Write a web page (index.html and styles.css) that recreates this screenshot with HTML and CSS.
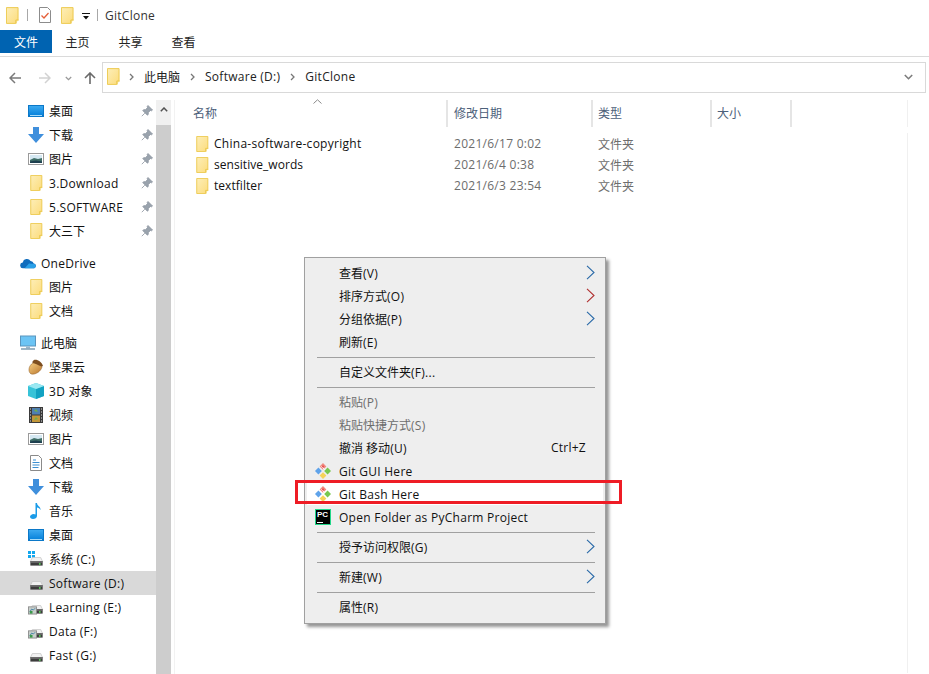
FILE: index.html
```html
<!DOCTYPE html>
<html lang="zh-CN">
<head>
<meta charset="utf-8">
<title>GitClone</title>
<link rel="stylesheet" href="styles.css">
</head>
<body>
<svg class="defs" width="0" height="0" aria-hidden="true">
  <defs>
    <linearGradient id="fg" x1="0" y1="0" x2="1" y2="1"><stop offset="0" stop-color="#fdeeb8"/><stop offset="1" stop-color="#fcdc7c"/></linearGradient>
    <linearGradient id="desk" x1="0" y1="0" x2="0" y2="1"><stop offset="0" stop-color="#3ba9f0"/><stop offset="1" stop-color="#0a84dc"/></linearGradient>
    <linearGradient id="nutg" x1="0" y1="0" x2="1" y2="1"><stop offset="0" stop-color="#f6cf82"/><stop offset="1" stop-color="#b9752c"/></linearGradient>
    <symbol id="folder" viewBox="0 0 14 18"><path d="M.5.5h12.5v13.500h-2.500v3.500H.5z" fill="url(#fg)" stroke="#ecc849"/><path d="M11 17.500V14h2.500" fill="#fff8d8" stroke="#ecc849"/></symbol>
    <symbol id="pin" viewBox="0 0 12 12"><path d="M7 .5l4.500 4.500-1 .8-1-.3L7.200 7.400 7.300 9.400 6.400 10.200 1.800 5.600 2.600 4.700 4.600 4.800 6.500 2.500 6.200 1.500zM3.800 8.200L.8 11.200" fill="#9aa3ad" stroke="#8a939e" stroke-width=".8"/></symbol>
    <symbol id="desktop" viewBox="0 0 16 12"><rect x="0" y="0" width="16" height="12" fill="#0b78c8"/><rect x="1" y="1" width="14" height="9" fill="url(#desk)"/><path d="M2 10.500h12" stroke="#a8dcfa"/></symbol>
    <symbol id="down" viewBox="0 0 16 16"><path d="M5 0h6v7h5l-8 9-8-9h5z" fill="#3f8fdc"/></symbol>
    <symbol id="pic" viewBox="0 0 16 12"><rect x=".5" y=".5" width="15" height="11" fill="#fff" stroke="#9a9a9a"/><rect x="2" y="2" width="12" height="8" fill="#d5e8f2"/><path d="M2 7l4-2 4 1 4-1v5H2z" fill="#3e6d66"/><path d="M2 8.500l6-1 6 1V10H2z" fill="#1d3f4f"/></symbol>
    <symbol id="cloud" viewBox="0 0 17 12"><path d="M3.500 11.500a3 3 0 0 1-.6-6 4.500 4.500 0 0 1 8.300-1.500 3.800 3.800 0 0 1 3.400 2.600 2.500 2.500 0 0 1 .5 4.900z" fill="#0f6cbd"/><path d="M5 11.500l4.500-5 6 .5a2.500 2.500 0 0 1-.500 4.500z" fill="#2aa0e8"/></symbol>
    <symbol id="pc" viewBox="0 0 16 15"><rect x=".5" y=".5" width="15" height="10" fill="#6cc4f4" stroke="#5a95bd"/><path d="M6 11h4v2H6z" fill="#9ab8cc"/><path d="M1 13.500h14" stroke="#7d9db2" stroke-width="1.500"/></symbol>
    <symbol id="nut" viewBox="0 0 16 16"><path d="M5 4c3-1 7 1 9 4-1 4-6 8-11 7C0 13 0 7 5 4z" fill="url(#nutg)" stroke="#8f5a22" stroke-width=".5"/><path d="M6 1c3-1 8 2 9 6-1 1-3 0-5-1S6 4 5 4 4 2 6 1z" fill="#7d4e1f"/></symbol>
    <symbol id="cube" viewBox="0 0 16 16"><path d="M8 0l8 3v10l-8 3-8-3V3z" fill="#37c3d8"/><path d="M8 6l8-3v10l-8 3z" fill="#12a2c2"/><path d="M8 0l8 3-8 3-8-3z" fill="#9ae8f2"/></symbol>
    <symbol id="film" viewBox="0 0 14 16"><rect width="14" height="16" fill="#3a3a3a"/><rect x="3" y="1" width="8" height="6.500" fill="#4f7fb2"/><rect x="3" y="8.500" width="8" height="6.500" fill="#c2973a"/><path d="M1 2h1M1 5h1M1 8h1M1 11h1M1 14h1M12 2h1M12 5h1M12 8h1M12 11h1M12 14h1" stroke="#ddd"/><path d="M5 4l2-2 2 3zM5 13l2-3 2 2z" fill="#6fb04a"/></symbol>
    <symbol id="doc" viewBox="0 0 12 16"><path d="M.5.500h8l3 3v12H.5z" fill="#fff" stroke="#8a8a8a"/><path d="M3 5h3M2.500 7.500h7M2.500 10h7M2.500 12.500h6" stroke="#3b8fd0"/></symbol>
    <symbol id="note" viewBox="0 0 12 16"><path d="M5.500 0h1.500c0 3 4 3.500 3.500 7-.8-1.600-2-2.300-3.500-2.500V13c0 2-2 3-4 3s-3-1-3-2.200S1.800 11 3.500 11c.8 0 1.500.2 2 .5z" fill="#1a9be8"/></symbol>
    <symbol id="drive" viewBox="0 0 16 11"><path d="M3 .5h10l2.500 5h-15z" fill="#f1f1f1" stroke="#c8c8c8"/><rect x=".5" y="5" width="15" height="5.500" fill="#3c3c3c"/><rect x="1" y="5.500" width="14" height="1.200" fill="#8e8e8e"/><rect x="11" y="7.500" width="2" height="2" fill="#5fdc5f"/></symbol>
    <symbol id="win" viewBox="0 0 6 6"><path d="M0 0h2.600v2.600H0zM3.400 0H6v2.600H3.400zM0 3.400h2.600V6H0zM3.400 3.400H6V6H3.400z" fill="#11a7ee"/></symbol>
    <symbol id="net" viewBox="0 0 10 10"><rect x=".5" y="1.500" width="9" height="8" fill="#c9d0cc" stroke="#8c8c8c"/><path d="M2 7l2-3 2 1 2-2" stroke="#3f7ea6" fill="none"/><rect x="2" y="6" width="3" height="3" fill="#3c9a4a"/></symbol>
    <symbol id="git" viewBox="0 0 16 16"><path d="M8 0l3.400 3.400L8 6.800 4.600 3.400z" fill="#f08a80"/><path d="M3.400 4.600L6.800 8 3.400 11.400 0 8z" fill="#5fa3ea"/><path d="M12.600 4.600L16 8l-3.400 3.400L9.200 8z" fill="#78c850"/><path d="M8 9.200l3.400 3.400L8 16l-3.400-3.400z" fill="#f5d35a"/><path d="M6.500 3.400l3.400 3.400" stroke="#fff"/><circle cx="8" cy="3.400" r="1" fill="#e84a4a"/></symbol>
    <symbol id="chev" viewBox="0 0 9 15"><path d="M1 .8L8 7.500 1 14.200" fill="none" stroke="#2a6aa8" stroke-width="1.100"/></symbol>
    <symbol id="chev-red" viewBox="0 0 9 15"><path d="M1 .8L8 7.500 1 14.200" fill="none" stroke="#b03030" stroke-width="1.100"/></symbol>
    <symbol id="crumb" viewBox="0 0 5 8"><path d="M1 1l3 3-3 3" fill="none" stroke="#777" stroke-width="1.300"/></symbol>
  </defs>
</svg>

<div class="window">
  <header class="titlebar">
    <svg class="ico-folder tb-first"><use href="#folder"/></svg>
    <span class="qsep qsep-a"></span>
    <svg class="ico-check" viewBox="0 0 12 16"><path d="M.5.500h8l3 3v12H.5z" fill="#fff" stroke="#8c8c8c"/><path d="M2.500 8.500l2.500 2.500 4.500-5" fill="none" stroke="#e5603a" stroke-width="1.300"/></svg>
    <svg class="ico-folder"><use href="#folder"/></svg>
    <svg class="ico-caret" viewBox="0 0 8 7"><path d="M0 .5h8" stroke="#111"/><path d="M1 3h6L4 6.500z" fill="#111"/></svg>
    <span class="qsep"></span>
    <span class="title-text la">GitClone</span>
  </header>

  <nav class="ribbon">
    <span class="tab tab-file">文件</span>
    <span class="tab">主页</span>
    <span class="tab">共享</span>
    <span class="tab">查看</span>
  </nav>

  <section class="addressrow">
    <svg class="navbtn" viewBox="0 0 12 12"><path d="M12 6H1.500M6 1L1 6l5 5" fill="none" stroke="#7a7a7a" stroke-width="1.500"/></svg>
    <svg class="navbtn" viewBox="0 0 12 12"><path d="M0 6h10.500M6 1l5 5-5 5" fill="none" stroke="#d2d2d2" stroke-width="1.500"/></svg>
    <svg class="navdrop" viewBox="0 0 7 5"><path d="M.8 1l2.700 2.700L6.200 1" fill="none" stroke="#999" stroke-width="1.300"/></svg>
    <svg class="navbtn navbtn-last" viewBox="0 0 12 12"><path d="M6 12V1.500M1 6l5-5 5 5" fill="none" stroke="#6a6a6a" stroke-width="1.600"/></svg>
    <div class="addressbox">
      <svg class="ico-folder"><use href="#folder"/></svg>
      <svg class="crumb crumb-first"><use href="#crumb"/></svg>
      <span>此电脑</span>
      <svg class="crumb"><use href="#crumb"/></svg>
      <span class="la">Software (D:)</span>
      <svg class="crumb"><use href="#crumb"/></svg>
      <span class="la">GitClone</span>
      <svg class="addr-drop" viewBox="0 0 9 6"><path d="M.8 1l3.700 3.700L8.200 1" fill="none" stroke="#7c7c7c" stroke-width="1.600"/></svg>
    </div>
  </section>

  <main class="main">
    <aside class="sidebar">
      <ul class="navgroup">
        <li class="nav sub"><svg class="i16x12"><use href="#desktop"/></svg><span class="label">桌面</span><svg class="pin"><use href="#pin"/></svg></li>
        <li class="nav sub"><svg class="i16"><use href="#down"/></svg><span class="label">下载</span><svg class="pin"><use href="#pin"/></svg></li>
        <li class="nav sub"><svg class="i16x12"><use href="#pic"/></svg><span class="label">图片</span><svg class="pin"><use href="#pin"/></svg></li>
        <li class="nav sub"><svg class="i16 fold"><use href="#folder"/></svg><span class="label la">3.Download</span><svg class="pin"><use href="#pin"/></svg></li>
        <li class="nav sub"><svg class="i16 fold"><use href="#folder"/></svg><span class="label la">5.SOFTWARE</span><svg class="pin"><use href="#pin"/></svg></li>
        <li class="nav sub"><svg class="i16 fold"><use href="#folder"/></svg><span class="label">大三下</span><svg class="pin"><use href="#pin"/></svg></li>
      </ul>
      <ul class="navgroup">
        <li class="nav top"><svg class="i16x12"><use href="#cloud"/></svg><span class="label la">OneDrive</span></li>
        <li class="nav sub"><svg class="i16 fold"><use href="#folder"/></svg><span class="label">图片</span></li>
        <li class="nav sub"><svg class="i16 fold"><use href="#folder"/></svg><span class="label">文档</span></li>
      </ul>
      <ul class="navgroup">
        <li class="nav top"><svg class="i16"><use href="#pc"/></svg><span class="label">此电脑</span></li>
        <li class="nav sub"><svg class="i16"><use href="#nut"/></svg><span class="label">坚果云</span></li>
        <li class="nav sub"><svg class="i16"><use href="#cube"/></svg><span class="label"><span class="la">3D </span>对象</span></li>
        <li class="nav sub"><svg class="i16"><use href="#film"/></svg><span class="label">视频</span></li>
        <li class="nav sub"><svg class="i16x12"><use href="#pic"/></svg><span class="label">图片</span></li>
        <li class="nav sub"><svg class="i16"><use href="#doc"/></svg><span class="label">文档</span></li>
        <li class="nav sub"><svg class="i16"><use href="#down"/></svg><span class="label">下载</span></li>
        <li class="nav sub"><svg class="i16"><use href="#note"/></svg><span class="label">音乐</span></li>
        <li class="nav sub"><svg class="i16x12"><use href="#desktop"/></svg><span class="label">桌面</span></li>
        <li class="nav sub"><span class="drivebox"><svg class="drive-win"><use href="#win"/></svg><svg class="drive"><use href="#drive"/></svg></span><span class="label">系统<span class="la"> (C:)</span></span></li>
        <li class="nav sub selected"><span class="drivebox"><svg class="drive"><use href="#drive"/></svg></span><span class="label la">Software (D:)</span></li>
        <li class="nav sub"><span class="drivebox"><svg class="drive"><use href="#drive"/></svg><svg class="drive-net"><use href="#net"/></svg></span><span class="label la">Learning (E:)</span></li>
        <li class="nav sub"><span class="drivebox"><svg class="drive"><use href="#drive"/></svg><svg class="drive-net"><use href="#net"/></svg></span><span class="label la">Data (F:)</span></li>
        <li class="nav sub"><span class="drivebox"><svg class="drive"><use href="#drive"/></svg></span><span class="label la">Fast (G:)</span></li>
      </ul>
    </aside>

    <div class="scrollbar">
      <div class="scroll-up"><svg class="scroll-arrow" viewBox="0 0 8 5"><path d="M.8 4.200L4 1l3.200 3.200" fill="none" stroke="#505050" stroke-width="1.500"/></svg></div>
      <div class="scroll-thumb"></div>
    </div>

    <section class="files">
      <div class="header">
        <div class="col col-name"><svg class="sort" viewBox="0 0 9 5"><path d="M.5 4.500L4.500.8l4 3.700" fill="none" stroke="#8a8a8a"/></svg>名称</div>
        <div class="col col-date">修改日期</div>
        <div class="col col-type">类型</div>
        <div class="col col-size">大小</div>
      </div>
      <div class="rows">
        <div class="row"><div class="cell-name"><svg class="file-folder"><use href="#folder"/></svg><span class="la">China-software-copyright</span></div><div class="cell-date la">2021/6/17 0:02</div><div class="cell-type">文件夹</div></div>
        <div class="row"><div class="cell-name"><svg class="file-folder"><use href="#folder"/></svg><span class="tight">sensitive_words</span></div><div class="cell-date la">2021/6/4 0:38</div><div class="cell-type">文件夹</div></div>
        <div class="row"><div class="cell-name"><svg class="file-folder"><use href="#folder"/></svg><span class="tight">textfilter</span></div><div class="cell-date la">2021/6/3 23:54</div><div class="cell-type">文件夹</div></div>
      </div>
    </section>
  </main>

  <div class="menu">
    <div class="mi"><span class="mi-icon"></span><span class="mi-text">查看<span class="la">(V)</span></span><svg class="mi-arrow"><use href="#chev"/></svg></div>
    <div class="mi"><span class="mi-icon"></span><span class="mi-text">排序方式<span class="la">(O)</span></span><svg class="mi-arrow"><use href="#chev-red"/></svg></div>
    <div class="mi"><span class="mi-icon"></span><span class="mi-text">分组依据<span class="la">(P)</span></span><svg class="mi-arrow"><use href="#chev"/></svg></div>
    <div class="mi"><span class="mi-icon"></span><span class="mi-text">刷新<span class="la">(E)</span></span></div>
    <div class="msep"></div>
    <div class="mi"><span class="mi-icon"></span><span class="mi-text">自定义文件夹<span class="la">(F)...</span></span></div>
    <div class="msep"></div>
    <div class="mi off"><span class="mi-icon"></span><span class="mi-text">粘贴<span class="la">(P)</span></span></div>
    <div class="mi off"><span class="mi-icon"></span><span class="mi-text">粘贴快捷方式<span class="la">(S)</span></span></div>
    <div class="mi"><span class="mi-icon"></span><span class="mi-text">撤消 移动<span class="la">(U)</span></span><span class="mi-key la">Ctrl+Z</span></div>
    <div class="mi"><span class="mi-icon"><svg class="mi-svg"><use href="#git"/></svg></span><span class="mi-text la">Git GUI Here</span></div>
    <div class="mi hot"><span class="mi-icon"><svg class="mi-svg"><use href="#git"/></svg></span><span class="mi-text la">Git Bash Here</span></div>
    <div class="mi"><span class="mi-icon"><span class="pycharm"><span class="pc-t">PC</span><span class="pc-u"></span></span></span><span class="mi-text la">Open Folder as PyCharm Project</span></div>
    <div class="msep"></div>
    <div class="mi"><span class="mi-icon"></span><span class="mi-text">授予访问权限<span class="la">(G)</span></span><svg class="mi-arrow"><use href="#chev"/></svg></div>
    <div class="msep"></div>
    <div class="mi"><span class="mi-icon"></span><span class="mi-text">新建<span class="la">(W)</span></span><svg class="mi-arrow"><use href="#chev"/></svg></div>
    <div class="msep"></div>
    <div class="mi"><span class="mi-icon"></span><span class="mi-text">属性<span class="la">(R)</span></span></div>
  </div>
  <div class="callout"></div>
</div>
</body>
</html>
```

FILE: styles.css
```css
* { box-sizing: border-box; }
html, body { margin: 0; padding: 0; background: #fff; }
body {
  font-family: "Open Sans", "Noto Sans CJK SC", sans-serif;
  font-size: 12px;
  color: #000;
}
.defs { position: absolute; }
ul { list-style: none; margin: 0; padding: 0; }
svg { display: block; flex: none; }
.la { letter-spacing: .27px; }
.tight { letter-spacing: .05px; }

.window {
  position: relative;
  width: 929px;
  height: 674px;
  overflow: hidden;
  display: flex;
  flex-direction: column;
}

/* title bar */
.titlebar {
  height: 30px;
  display: flex;
  align-items: center;
  padding-left: 6px;
}
.ico-folder { width: 13px; height: 17px; }
.tb-first { margin-right: 8px; }
.qsep { width: 1px; height: 12px; background: #a8a8a8; }
.qsep-a { margin-right: 11px; }
.ico-check { width: 12px; height: 16px; margin-right: 10px; }
.ico-caret { width: 8px; height: 7px; margin: 2px 7px 0 8px; }
.title-text { margin-left: 7px; color: #333; }

/* ribbon */
.ribbon {
  height: 27px;
  display: flex;
  align-items: flex-start;
  border-bottom: 1px solid #dadada;
}
.tab {
  height: 23px;
  line-height: 26px;
  width: 53px;
  text-align: center;
  color: #222;
}
.tab-file { width: 52px; background: #0063b1; color: #fff; margin-right: -1px; }

/* address */
.addressrow {
  height: 42px;
  display: flex;
  align-items: center;
  padding: 0 3px 0 9px;
}
.navbtn { width: 12px; height: 12px; margin-right: 18px; }
.navdrop { width: 7px; height: 5px; margin: 0 12px 0 -4px; }
.navbtn-last { margin-right: 6px; margin-top: -1px; }
.addressbox {
  flex: 1;
  height: 31px;
  margin-top: -1px;
  display: flex;
  align-items: center;
  padding: 0 12px 2px 4px;
  border: 1px solid #d9d9d9;
  color: #222;
  white-space: nowrap;
}
.crumb { width: 5px; height: 8px; margin: 0 10px; }
.crumb-first { margin-left: 9px; }
.addr-drop { width: 9px; height: 6px; margin-left: auto; }

/* main */
.main { flex: 1; display: flex; min-height: 0; }

.sidebar {
  width: 156px;
  flex: none;
  display: flex;
  flex-direction: column;
  gap: 8px;
  overflow: hidden;
}
.nav {
  height: 24px;
  display: flex;
  align-items: center;
  white-space: nowrap;
}
.nav.sub { padding-left: 28px; }
.nav.top { padding-left: 20px; }
.nav.selected { background: #d9d9d9; }
.label { margin-left: 5px; color: #111; }
.i16x12 { width: 16px; height: 12px; }
.i16 { width: 16px; height: 16px; }
.i16.fold { width: 13px; height: 16px; margin: 0 1px 0 2px; }
.pin { width: 12px; height: 12px; margin-left: auto; margin-right: 3px; }
.drivebox { position: relative; display: block; width: 16px; height: 16px; }
.drive { position: absolute; left: 1px; top: 6px; width: 15px; height: 9px; }
.drive-win { position: absolute; left: 0; top: 0; width: 7px; height: 7px; }
.drive-net { position: absolute; left: 0; top: 6px; width: 9px; height: 10px; }

.scrollbar {
  width: 15px;
  flex: none;
  display: flex;
  flex-direction: column;
  margin-top: 1px;
}
.scroll-up {
  height: 25px;
  background: #f0f0f0;
  display: flex;
  justify-content: center;
  padding-top: 7px;
}
.scroll-arrow { width: 8px; height: 5px; }
.scroll-thumb { flex: 1; background: #cdcdcd; }

/* files */
.files {
  flex: 1;
  margin-top: 1px;
  margin-left: 3px;
  border-left: 1px solid #f2f2f2;
}
.header {
  display: flex;
  height: 27px;
  width: 733px;
  border-right: 1px solid #f0f0f0;
  color: #4c607a;
}
.col { height: 27px; line-height: 28px; border-right: 2px solid #e5e5e5; position: relative; white-space: nowrap; }
.col-name { width: 273px; padding-left: 18px; }
.col-date { width: 145px; padding-left: 6px; }
.col-type { width: 119px; padding-left: 5px; }
.col-size { width: 80px; padding-left: 5px; }
.sort { position: absolute; left: 138px; top: -1px; width: 9px; height: 5px; }

.rows {
  margin-top: 6px;
  width: 733px;
  height: 540px;
  border-right: 1px solid #f0f0f0;
}
.row { display: flex; height: 21px; align-items: center; color: #6d6d6d; white-space: nowrap; }
.cell-name { width: 279px; display: flex; align-items: center; padding-left: 21px; color: #111; }
.file-folder { width: 13px; height: 16px; margin-right: 5px; }
.cell-date { width: 144px; }
.cell-type { width: 100px; }

/* context menu */
.menu {
  position: absolute;
  left: 304px;
  top: 257px;
  width: 302px;
  height: 367px;
  background: #eeeeee;
  border: 1px solid #a0a0a0;
  padding: 3px 2px;
  box-shadow: 3px 3px 3px rgba(0, 0, 0, .42);
}
.mi {
  height: 23px;
  display: flex;
  align-items: center;
  color: #111;
  white-space: nowrap;
}
.mi.off { color: #6d6d6d; }
.mi.hot { background: #fff; }
.mi-icon { width: 32px; flex: none; display: flex; padding-left: 8px; }
.mi-svg { width: 16px; height: 16px; }
.mi-text.la { padding-top: 2px; }
.mi-arrow { width: 9px; height: 15px; margin-left: auto; margin-right: 8px; }
.mi-key { margin-left: auto; margin-right: 17px; }
.msep { height: 7px; padding-top: 4px; margin: 0 8px 0 10px; }
.msep::before { content: ""; display: block; height: 1px; background: #a0a0a0; }
.pycharm {
  width: 16px;
  height: 16px;
  background: #000;
  border: 1px solid #21d789;
  display: block;
  position: relative;
}
.pc-t {
  display: block;
  color: #fff;
  font: bold 8px/9px "Liberation Sans", sans-serif;
  padding-left: 1px;
}
.pc-u { position: absolute; left: 1px; bottom: 1px; width: 6px; height: 1px; background: #fff; }

.callout {
  position: absolute;
  left: 295px;
  top: 480px;
  width: 327px;
  height: 24px;
  border: 3px solid #ee1c25;
}
```
